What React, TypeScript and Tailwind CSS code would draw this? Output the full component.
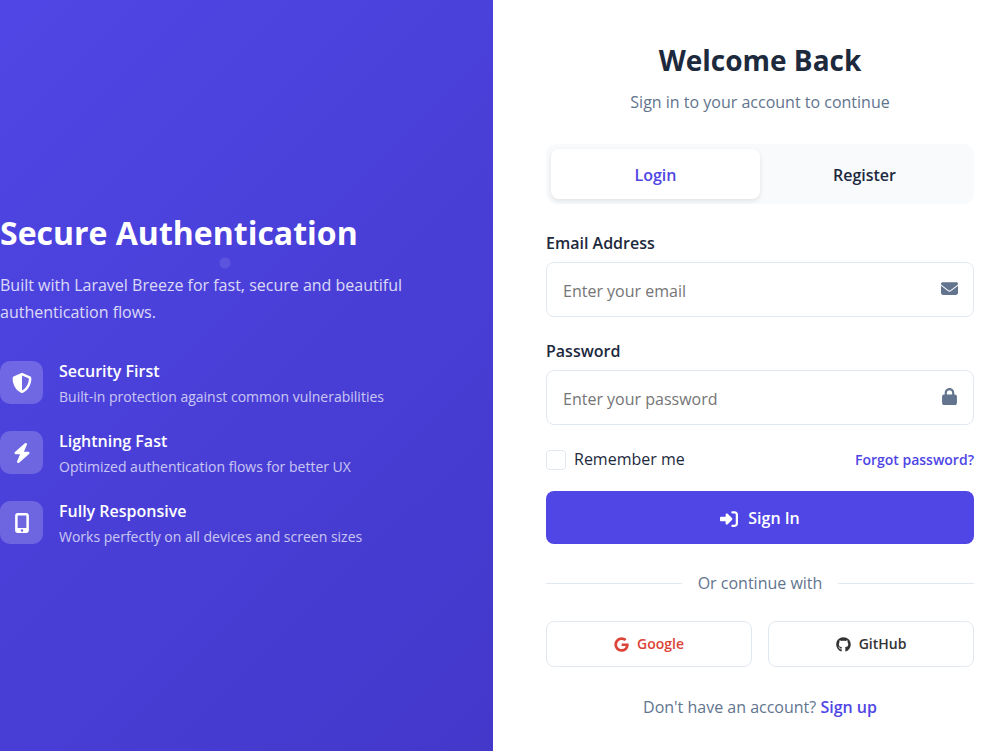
import { useState } from 'react'
import { FaGoogle } from 'react-icons/fa'
import {
  FaBolt,
  FaEnvelope,
  FaGithub,
  FaLock,
  FaMobileScreenButton,
  FaRightToBracket,
  FaShieldHalved,
} from 'react-icons/fa6'

const features = [
  {
    icon: FaShieldHalved,
    title: 'Security First',
    text: 'Built-in protection against common vulnerabilities',
  },
  {
    icon: FaBolt,
    title: 'Lightning Fast',
    text: 'Optimized authentication flows for better UX',
  },
  {
    icon: FaMobileScreenButton,
    title: 'Fully Responsive',
    text: 'Works perfectly on all devices and screen sizes',
  },
]

const fields = [
  { id: 'email', type: 'email', label: 'Email Address', placeholder: 'Enter your email', icon: FaEnvelope },
  { id: 'password', type: 'password', label: 'Password', placeholder: 'Enter your password', icon: FaLock },
]

const tabs = ['Login', 'Register']

const App = () => {
  const [activeTab, setActiveTab] = useState('Login')

  return (
    <div className="flex min-h-screen bg-white font-['Open_Sans','Noto_Sans',sans-serif] text-base leading-[27px] text-slate-800">
      {/* Brand panel */}
      <section className="relative flex w-[49.3%] flex-col justify-center bg-linear-135 from-[#4f46e5] to-[#4338ca] pt-[5px] text-white">
        <span className="absolute top-[35%] left-[45.7%] -translate-x-1/2 -translate-y-1/2 size-[11px] rounded-full bg-white/10" />
        <h1 className="text-[32px] leading-[54px] font-bold">Secure Authentication</h1>
        <p className="mt-3 max-w-[420px] opacity-80">
          Built with Laravel Breeze for fast, secure and beautiful authentication flows.
        </p>
        <ul className="mt-[29px] flex flex-col gap-[15px]">
          {features.map(({ icon: Icon, title, text }) => (
            <li key={title} className="flex items-center gap-4">
              <span className="flex size-[43px] shrink-0 items-center justify-center rounded-[10px] bg-white/20">
                <Icon size={20} />
              </span>
              <div className="pt-[3px]">
                <h3 className="leading-[26px] font-semibold">{title}</h3>
                <p className="text-sm leading-[26px] opacity-70">{text}</p>
              </div>
            </li>
          ))}
        </ul>
      </section>

      {/* Form panel */}
      <main className="flex-1 pt-9 pr-[26px] pb-[30px] pl-[53px]">
        <header className="text-center">
          <h2 className="text-[28px] leading-[48px] font-bold">Welcome Back</h2>
          <p className="mt-[5px] text-slate-500">Sign in to your account to continue</p>
        </header>

        <div className="mt-7 flex rounded-[10px] bg-slate-50 p-[5px]">
          {tabs.map((tab) => (
            <button
              key={tab}
              type="button"
              onClick={() => setActiveTab(tab)}
              className={`h-[50px] flex-1 rounded-lg pt-0.5 font-semibold ${
                activeTab === tab ? 'bg-white text-[#4f46e5] shadow-[0_2px_5px_rgba(0,0,0,0.1)]' : ''
              }`}
            >
              {tab}
            </button>
          ))}
        </div>

        <form className="mt-[26px]" onSubmit={(e) => e.preventDefault()}>
          {fields.map(({ id, type, label, placeholder, icon: Icon }) => (
            <div key={id} className="mb-[21px]">
              <label htmlFor={id} className="mb-[5px] block font-semibold">
                {label}
              </label>
              <div className="relative">
                <input
                  id={id}
                  type={type}
                  placeholder={placeholder}
                  className="block h-[55px] w-full rounded-lg border border-slate-200 pt-0.5 pr-12 pl-4 placeholder:text-[#757575]"
                />
                <Icon size={17} className="absolute top-[18px] right-4 text-slate-500" />
              </div>
            </div>
          ))}

          <div className="flex items-center justify-between">
            <label className="flex items-center gap-2">
              <input
                type="checkbox"
                className="size-5 appearance-none rounded border border-slate-200 checked:bg-[#4f46e5]"
              />
              Remember me
            </label>
            <a href="#" className="text-sm font-semibold text-[#4f46e5]">
              Forgot password?
            </a>
          </div>

          <button
            type="submit"
            className="mt-[18px] flex h-[53px] w-full items-center justify-center gap-2.5 rounded-lg bg-[#4f46e5] pt-0.5 font-semibold text-white"
          >
            <FaRightToBracket size={18} />
            Sign In
          </button>
        </form>

        <div className="mt-[26px] flex items-center gap-4 text-slate-500">
          <span className="h-px flex-1 bg-slate-200" />
          Or continue with
          <span className="h-px flex-1 bg-slate-200" />
        </div>

        <div className="mt-6 grid grid-cols-2 gap-4 text-sm font-semibold">
          <button
            type="button"
            className="flex h-[46px] items-center justify-center gap-2 rounded-lg border border-slate-200 text-[#db4437]"
          >
            <FaGoogle size={15} />
            Google
          </button>
          <button
            type="button"
            className="flex h-[46px] items-center justify-center gap-2 rounded-lg border border-slate-200 text-[#333]"
          >
            <FaGithub size={15} />
            GitHub
          </button>
        </div>

        <p className="mt-[27px] text-center text-slate-500">
          Don't have an account?{' '}
          <a href="#" className="font-semibold text-[#4f46e5]">
            Sign up
          </a>
        </p>
      </main>
    </div>
  )
}

export default App
